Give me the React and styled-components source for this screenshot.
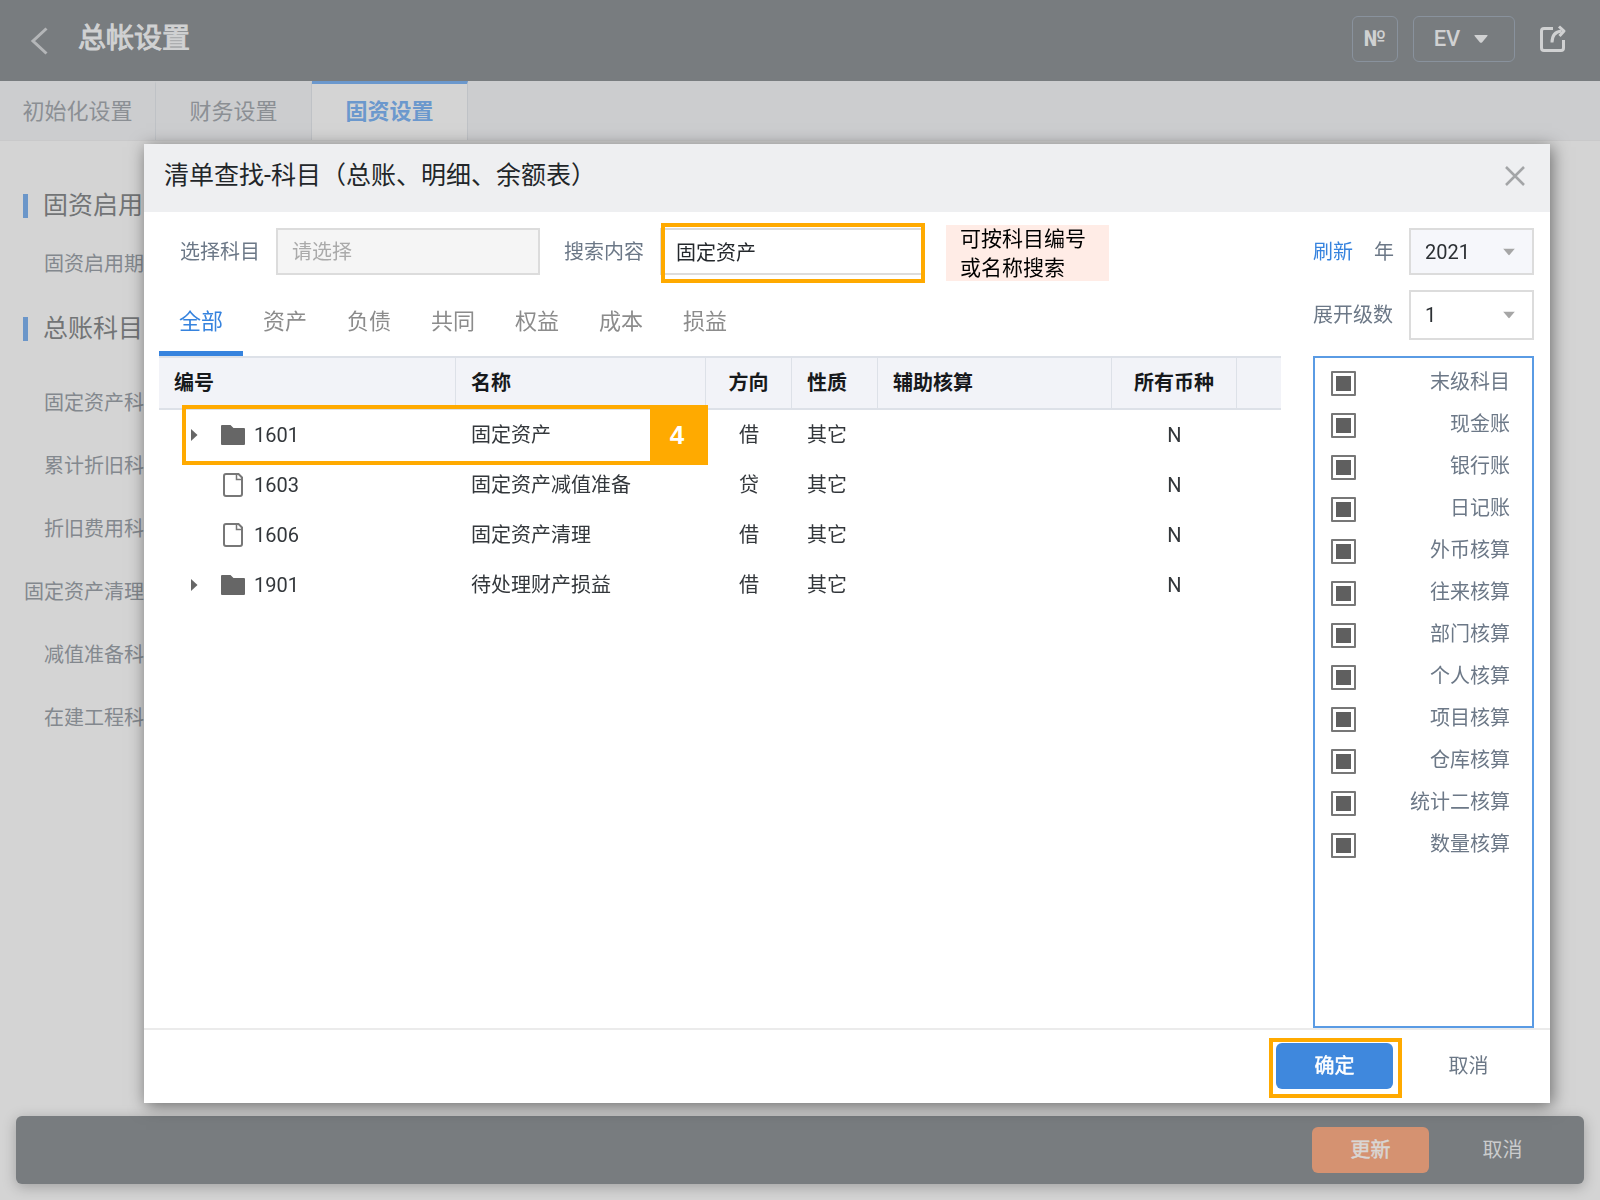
import React, { useEffect, useRef, useState } from "react";
import styled, { createGlobalStyle } from "styled-components";

const Global = createGlobalStyle`
  *, *::before, *::after { box-sizing: border-box; }
  body {
    margin: 0;
    background: #d4d4d4;
    font-family: Roboto, "Noto Sans CJK SC", sans-serif;
    font-size: 20px;
    line-height: 24px;
  }
  button, input, select { font: inherit; }
  button { cursor: pointer; }
`;

const Page = styled.div`
  display: flex;
  flex-direction: column;
  min-height: 100vh;
`;

const TopBar = styled.header`
  display: flex;
  align-items: center;
  height: 81px;
  padding: 0 33px 4px 28px;
  background: #787c7f;
  color: #d0d1d2;
`;

const BareButton = styled.button`
  display: flex;
  align-items: center;
  justify-content: center;
  padding: 0;
  border: 0;
  background: none;
  color: inherit;
`;

const BackButton = styled(BareButton)`
  width: 22px;
  padding-top: 4px;
  color: #b4b6b8;
`;

const PageTitle = styled.h1`
  flex: 1;
  margin: 0 0 0 28px;
  font-size: 28px;
  font-weight: 400;
  line-height: 36px;
  -webkit-text-stroke: 1px;
`;

const OutlineButton = styled(BareButton)`
  gap: 14px;
  width: ${(p) => p.$width}px;
  height: 46px;
  margin-right: ${(p) => p.$after}px;
  padding-right: ${(p) => (p.$bold ? 0 : 6)}px;
  border: 1px solid #89929d;
  border-radius: 6px;
  font-size: 22px;
  font-weight: ${(p) => (p.$bold ? 700 : 500)};
`;

const TabBar = styled.nav`
  display: flex;
  height: 60px;
  background: #cccdcf;
  border-bottom: 1px solid #c9c9ca;
`;

const PageTab = styled.button`
  width: 156px;
  padding: 0;
  border: 0;
  border-top: 3px solid ${(p) => (p.$active ? "#6b98cd" : "transparent")};
  border-right: 1px solid #bfc2c6;
  background: ${(p) => (p.$active ? "#d4d4d4" : "none")};
  color: ${(p) => (p.$active ? "#6b98cd" : "#8b8f94")};
  font-size: 22px;
  font-weight: ${(p) => (p.$active ? 700 : 400)};
`;

const Content = styled.main`
  flex: 1;
  width: 144px;
  padding-top: 53px;
`;

const SectionTitle = styled.h2`
  margin: 0 0 0 23px;
  padding-left: 15px;
  border-left: 5px solid #6b96c9;
  color: #727476;
  font-size: 25px;
  font-weight: 400;
  line-height: 24px;
  white-space: nowrap;
`;

const FieldList = styled.div`
  display: flex;
  flex-direction: column;
  align-items: flex-end;
  gap: 39px;
  padding-top: ${(p) => p.$top}px;
  padding-bottom: ${(p) => p.$bottom}px;
  color: #83888e;
  white-space: nowrap;
`;

const ActionBar = styled.footer`
  display: flex;
  align-items: center;
  justify-content: flex-end;
  height: 68px;
  margin: 0 16px 16px;
  border-radius: 6px;
  background: #787c7f;
  box-shadow: 0 3px 14px rgba(0, 0, 0, 0.25);
`;

const ActionButton = styled.button`
  width: 117px;
  height: 46px;
  padding: 0;
  border: 0;
  border-radius: 6px;
  background: ${(p) => p.$bg || "none"};
  color: ${(p) => p.$color};
  -webkit-text-stroke: ${(p) => (p.$strong ? "0.5px" : "0")};
`;

const ActionBarCancel = styled(ActionButton)`
  margin: 0 23px 0 15px;
`;

const Overlay = styled.div`
  position: fixed;
  inset: 0;
  display: flex;
  padding: 144px 50px 97px 144px;
`;

const Dialog = styled.section`
  flex: 1;
  display: flex;
  flex-direction: column;
  min-width: 0;
  background: #fff;
  box-shadow: 2px 3px 16px rgba(0, 0, 0, 0.5);
`;

const DialogHeader = styled.header`
  display: flex;
  align-items: center;
  justify-content: space-between;
  height: 68px;
  padding: 0 25px 4px 20px;
  background: #eeeff1;
`;

const DialogTitle = styled.h2`
  margin: 0;
  color: #222629;
  font-size: 25px;
  font-weight: 400;
  line-height: 32px;
`;

const DialogBody = styled.div`
  flex: 1;
  display: flex;
  gap: 32px;
  padding: 16px 16px 0 15px;
`;

const MainColumn = styled.div`
  flex: 1;
  min-width: 0;
`;

const FilterRow = styled.div`
  display: flex;
  align-items: center;
  height: 47px;
  margin-bottom: 13px;
  padding-left: 21px;
`;

const Label = styled.label`
  color: #6c7887;
  white-space: nowrap;
`;

const TextInput = styled.input`
  width: 264px;
  height: 47px;
  padding: 0 14px;
  border: 2px solid #dcdcdc;
  background: ${(p) => (p.$muted ? "#f5f5f5" : "#fff")};
  color: #24282c;
  outline: none;
  &::placeholder { color: #aaa; opacity: 1; }
`;

const FieldBox = styled.div`
  position: relative;
  display: flex;
  margin: 0 ${(p) => p.$after}px 0 16px;
`;

const SearchRing = styled.span`
  position: absolute;
  inset: -5px -1px -8px 1px;
  border: 4px solid #ffaa00;
  pointer-events: none;
`;

const Hint = styled.p`
  width: 163px;
  height: 56px;
  margin: 3px 0 0;
  padding-left: 14px;
  background: #ffece6;
  color: #000;
  font-size: 21px;
  line-height: 29px;
`;

const CategoryTabs = styled.div`
  display: flex;
  height: 68px;
`;

const CategoryTab = styled.button`
  padding: 0 20px;
  border: 0;
  border-top: 5px solid transparent;
  border-bottom: 5px solid ${(p) => (p.$active ? "#3683de" : "transparent")};
  background: none;
  color: ${(p) => (p.$active ? "#3683de" : "#8c8c8c")};
  font-size: 22px;
`;

const TableArea = styled.div`
  position: relative;
`;

const Table = styled.table`
  width: 100%;
  table-layout: fixed;
  border-spacing: 0;
  color: #33373b;
`;

const HeadCell = styled.th`
  width: ${(p) => (p.$width ? `${p.$width}px` : "auto")};
  height: 54px;
  padding: 0 0 0 ${(p) => (p.$center ? 0 : 15)}px;
  border: 0 solid #dde1e8;
  border-width: 2px 1px 2px 0;
  background: #f2f3f8;
  color: #17191c;
  text-align: ${(p) => (p.$center ? "center" : "left")};
  font-weight: 700;
  &:last-child { border-right: 0; }
`;

const Cell = styled.td`
  height: 50px;
  padding: 0 0 0 ${(p) => (p.$center ? 0 : 15)}px;
  text-align: ${(p) => (p.$center ? "center" : "left")};
  white-space: nowrap;
`;

const TreeNode = styled.div`
  display: grid;
  grid-template-columns: 30px 33px auto;
  align-items: center;
  padding-left: 17px;
`;

const IconSlot = styled.span`
  display: flex;
`;

const StepMarker = styled.div`
  position: absolute;
  top: 49px;
  left: 23px;
  display: flex;
  justify-content: flex-end;
  width: 526px;
  height: 60px;
  border: 4px solid #ffaa00;
  pointer-events: none;
`;

const StepNumber = styled.strong`
  width: 54px;
  background: #ffaa00;
  color: #fff;
  font-family: "Liberation Sans", sans-serif;
  font-size: 26px;
  line-height: 52px;
  text-align: center;
`;

const SideColumn = styled.aside`
  display: flex;
  flex-direction: column;
  width: 221px;
`;

const SideRow = styled.div`
  display: flex;
  align-items: center;
  justify-content: space-between;
  margin-bottom: ${(p) => p.$after}px;
`;

const RefreshLink = styled.a`
  margin-right: 6px;
  color: #3683de;
  text-decoration: none;
`;

const SelectBox = styled.div`
  position: relative;
  width: 125px;
  height: ${(p) => p.$height}px;
`;

const Select = styled.select`
  appearance: none;
  width: 100%;
  height: 100%;
  padding: 0 30px 0 14px;
  border: 2px solid #dcdcdc;
  border-radius: 0;
  background: ${(p) => (p.$tint ? "#f6f7fb" : "#fff")};
  color: #2c3034;
  outline: none;
`;

const SelectCaret = styled.svg`
  position: absolute;
  top: 50%;
  right: 19px;
  transform: translateY(-50%);
  pointer-events: none;
`;

const CheckPanel = styled.fieldset`
  flex: 1;
  min-width: 0;
  margin: 0;
  padding: 4px 22px 0 16px;
  border: 2px solid #5a9be4;
`;

const CheckRow = styled.label`
  display: flex;
  align-items: center;
  justify-content: space-between;
  height: 42px;
  color: #6c7887;
`;

const CheckText = styled.span`
  padding-bottom: 3px;
`;

const Check = styled.input`
  appearance: none;
  width: 25px;
  height: 25px;
  margin: 0;
  padding: 3px;
  border: 2px solid #777;
  border-radius: 1px;
  &:indeterminate, &:checked { background: #5f5f5f content-box; }
`;

const DialogFooter = styled.footer`
  display: flex;
  align-items: center;
  justify-content: flex-end;
  height: 75px;
  border-top: 2px solid #ebebeb;
`;

const ConfirmFrame = styled.div`
  display: flex;
  align-items: center;
  justify-content: center;
  width: 133px;
  height: 60px;
  margin-top: 2px;
  padding: 0 2px 4px 0;
  border: 4px solid #ffaa00;
`;

const DialogCancel = styled(ActionButton)`
  margin: 0 23px 0 8px;
  padding-bottom: 2px;
`;

const Caret = () => (
  <svg width="14" height="8" viewBox="0 0 14 8" aria-hidden="true">
    <path d="M1 0h12q1 0 .4.9L8 7.4q-1 .9-2 0L.6.9Q0 0 1 0z" fill="currentColor" />
  </svg>
);

const Arrow = () => (
  <svg width="7" height="12" viewBox="0 0 7 12" aria-hidden="true">
    <path d="M0 0l6.5 6L0 12z" fill="#666" />
  </svg>
);

const Folder = () => (
  <svg width="24" height="20" viewBox="0 0 24 20" aria-hidden="true">
    <path d="M1 0h8.500l3 3H23q1 0 1 1v15q0 1-1 1H1q-1 0-1-1V1q0-1 1-1z" fill="#666" />
  </svg>
);

const FileIcon = () => (
  <svg width="24" height="24" viewBox="0 0 24 24" fill="none" stroke="#777" strokeWidth="2" aria-hidden="true">
    <path d="M5 1H17.500L21 4.500V21q0 2-2 2H5q-2 0-2-2V3q0-2 2-2z" />
    <path d="M15.500 1.500V6.500H20.500" strokeWidth="1.500" />
  </svg>
);

const rows = [
  { code: "1601", name: "固定资产", side: "借", kind: "其它", all: "N", folder: true },
  { code: "1603", name: "固定资产减值准备", side: "贷", kind: "其它", all: "N" },
  { code: "1606", name: "固定资产清理", side: "借", kind: "其它", all: "N" },
  { code: "1901", name: "待处理财产损益", side: "借", kind: "其它", all: "N", folder: true },
];

const categories = ["全部", "资产", "负债", "共同", "权益", "成本", "损益"];

const options = [
  "末级科目", "现金账", "银行账", "日记账", "外币核算", "往来核算",
  "部门核算", "个人核算", "项目核算", "仓库核算", "统计二核算", "数量核算",
];

const accountFields = [
  "固定资产科", "累计折旧科", "折旧费用科", "固定资产清理", "减值准备科", "在建工程科",
];

function TriState({ text }) {
  const ref = useRef(null);
  useEffect(() => {
    ref.current.indeterminate = true;
  }, []);
  return (
    <CheckRow>
      <Check ref={ref} type="checkbox" />
      <CheckText>{text}</CheckText>
    </CheckRow>
  );
}

export default function App() {
  const [category, setCategory] = useState("全部");
  const [query, setQuery] = useState("固定资产");

  return (
    <>
      <Global />
      <Page>
        <TopBar>
          <BackButton aria-label="返回">
            <svg width="18" height="28" viewBox="0 0 18 28" fill="none" stroke="currentColor" strokeWidth="3">
              <path d="M16.500 1.500L3 14l13.500 12.500" />
            </svg>
          </BackButton>
          <PageTitle>总帐设置</PageTitle>
          <OutlineButton $width={46} $after={15} $bold>№</OutlineButton>
          <OutlineButton $width={102} $after={24}>
            EV
            <Caret />
          </OutlineButton>
          <BareButton aria-label="导出">
            <svg width="28" height="28" viewBox="0 0 28 28" fill="none" stroke="currentColor" strokeWidth="3">
              <path d="M14 3.500H5q-2.500 0-2.500 2.500V23q0 2.500 2.500 2.500H22q2.500 0 2.500-2.500V15" />
              <path d="M13 17.500Q13 7 22.500 6" />
              <path d="M20 1.500L25 6L20.500 11" strokeLinejoin="round" />
            </svg>
          </BareButton>
        </TopBar>
        <TabBar>
          <PageTab>初始化设置</PageTab>
          <PageTab>财务设置</PageTab>
          <PageTab $active>固资设置</PageTab>
        </TabBar>
        <Content>
          <SectionTitle>固资启用</SectionTitle>
          <FieldList $top={34} $bottom={41}>
            <span>固资启用期</span>
          </FieldList>
          <SectionTitle>总账科目</SectionTitle>
          <FieldList $top={50} $bottom={0}>
            {accountFields.map((f) => (
              <span key={f}>{f}</span>
            ))}
          </FieldList>
        </Content>
        <ActionBar>
          <ActionButton $bg="#d59271" $color="#d9d6d4" $strong>更新</ActionButton>
          <ActionBarCancel $color="#cbcccd">取消</ActionBarCancel>
        </ActionBar>
      </Page>

      <Overlay>
        <Dialog role="dialog" aria-labelledby="dialog-title">
          <DialogHeader>
            <DialogTitle id="dialog-title">清单查找-科目（总账、明细、余额表）</DialogTitle>
            <BareButton aria-label="关闭">
              <svg width="20" height="20" viewBox="0 0 20 20" stroke="#a3a5a7" strokeWidth="2.500">
                <path d="M1 1l18 18M19 1L1 19" />
              </svg>
            </BareButton>
          </DialogHeader>
          <DialogBody>
            <MainColumn>
              <FilterRow>
                <Label htmlFor="account">选择科目</Label>
                <FieldBox $after={24}>
                  <TextInput id="account" placeholder="请选择" $muted readOnly />
                </FieldBox>
                <Label htmlFor="query">搜索内容</Label>
                <FieldBox $after={22}>
                  <TextInput id="query" value={query} onChange={(e) => setQuery(e.target.value)} />
                  <SearchRing />
                </FieldBox>
                <Hint>
                  可按科目编号
                  <br />
                  或名称搜索
                </Hint>
              </FilterRow>
              <CategoryTabs>
                {categories.map((c) => (
                  <CategoryTab key={c} $active={c === category} onClick={() => setCategory(c)}>
                    {c}
                  </CategoryTab>
                ))}
              </CategoryTabs>
              <TableArea>
                <Table>
                  <thead>
                    <tr>
                      <HeadCell $width={297}>编号</HeadCell>
                      <HeadCell $width={250}>名称</HeadCell>
                      <HeadCell $width={86} $center>方向</HeadCell>
                      <HeadCell $width={86}>性质</HeadCell>
                      <HeadCell>辅助核算</HeadCell>
                      <HeadCell $width={125} $center>所有币种</HeadCell>
                      <HeadCell $width={44} />
                    </tr>
                  </thead>
                  <tbody>
                    {rows.map((r) => (
                      <tr key={r.code}>
                        <Cell>
                          <TreeNode>
                            <IconSlot>{r.folder && <Arrow />}</IconSlot>
                            <IconSlot>{r.folder ? <Folder /> : <FileIcon />}</IconSlot>
                            {r.code}
                          </TreeNode>
                        </Cell>
                        <Cell>{r.name}</Cell>
                        <Cell $center>{r.side}</Cell>
                        <Cell>{r.kind}</Cell>
                        <Cell />
                        <Cell $center>{r.all}</Cell>
                        <Cell />
                      </tr>
                    ))}
                  </tbody>
                </Table>
                <StepMarker>
                  <StepNumber>4</StepNumber>
                </StepMarker>
              </TableArea>
            </MainColumn>
            <SideColumn>
              <SideRow $after={15}>
                <RefreshLink href="#refresh">刷新</RefreshLink>
                <Label htmlFor="year">年</Label>
                <SelectBox $height={47}>
                  <Select id="year" defaultValue="2021" $tint>
                    <option>2021</option>
                  </Select>
                  <SelectCaret width="12" height="7" viewBox="0 0 12 7">
                    <path d="M0 0h12L6 7z" fill="#a6a6a6" />
                  </SelectCaret>
                </SelectBox>
              </SideRow>
              <SideRow $after={16}>
                <Label htmlFor="levels">展开级数</Label>
                <SelectBox $height={50}>
                  <Select id="levels" defaultValue="1">
                    <option>1</option>
                  </Select>
                  <SelectCaret width="12" height="7" viewBox="0 0 12 7">
                    <path d="M0 0h12L6 7z" fill="#a6a6a6" />
                  </SelectCaret>
                </SelectBox>
              </SideRow>
              <CheckPanel aria-label="科目筛选">
                {options.map((o) => (
                  <TriState key={o} text={o} />
                ))}
              </CheckPanel>
            </SideColumn>
          </DialogBody>
          <DialogFooter>
            <ConfirmFrame>
              <ActionButton $bg="#3f88dd" $color="#fff" $strong>确定</ActionButton>
            </ConfirmFrame>
            <DialogCancel $color="#6c7887">取消</DialogCancel>
          </DialogFooter>
        </Dialog>
      </Overlay>
    </>
  );
}
